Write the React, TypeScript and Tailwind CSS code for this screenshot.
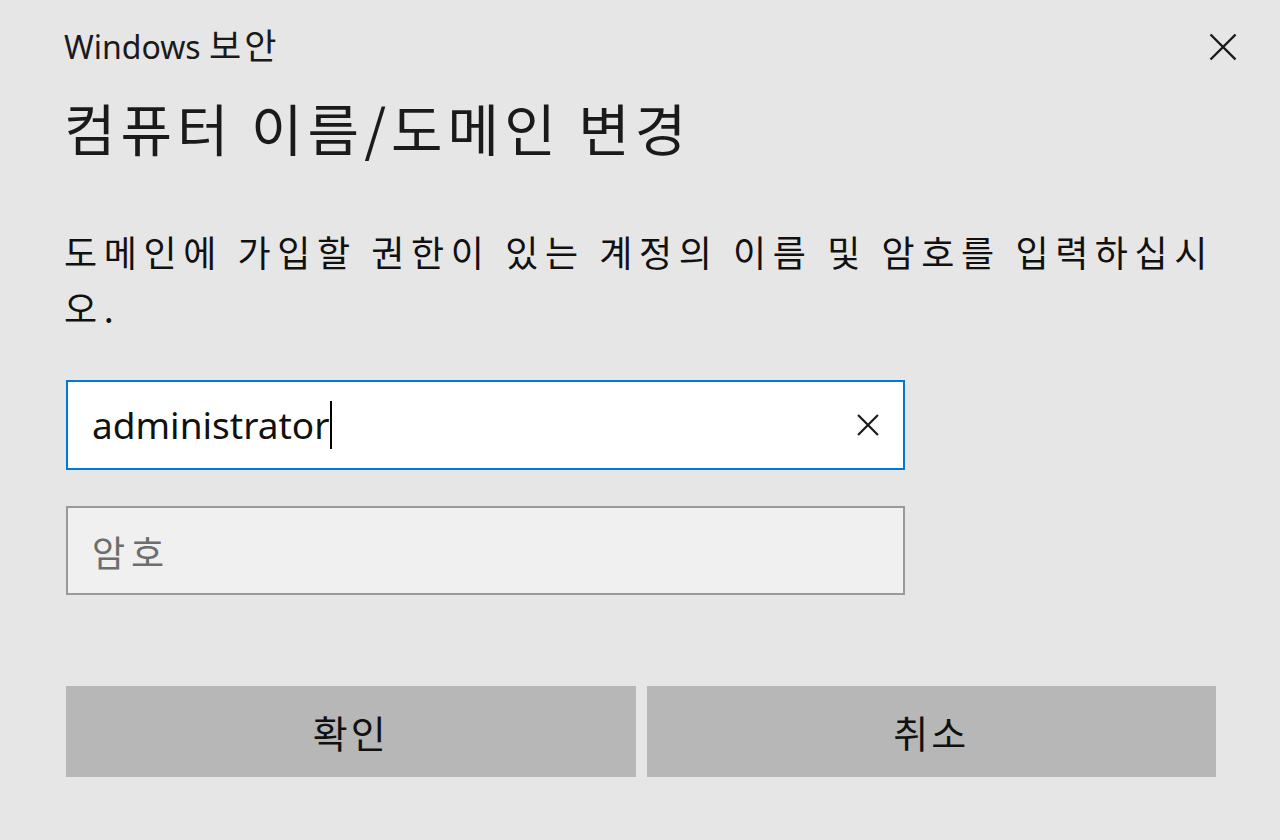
import React from "react";

function XIcon({ size, stroke }: { size: number; stroke: number }) {
  return (
    <svg width={size} height={size} viewBox="0 0 24 24" fill="none">
      <path d="M2 2 L22 22 M22 2 L2 22" stroke="#1a1a1a" strokeWidth={stroke} strokeLinecap="square" />
    </svg>
  );
}

export default function App() {
  return (
    <div className="w-[1280px] h-[840px] bg-[#e6e6e6] text-[#111] flex flex-col pl-[64px] pr-[64px] overflow-hidden font-['Noto_Sans_CJK_KR','Noto_Sans',sans-serif]">
      <div className="flex items-start justify-between pt-[24px] h-[86px]">
        <div className="text-[32px] leading-[40px] text-[#1a1a1a] font-['Noto_Sans','Noto_Sans_CJK_KR',sans-serif]">
          Windows <span className="text-[35px] tracking-[3px] font-['Noto_Sans_CJK_KR','Noto_Sans',sans-serif]">보안</span>
        </div>
        <button className="mt-[8px] mr-[-22px] w-[30px] h-[30px] flex items-center justify-center">
          <XIcon size={28} stroke={2} />
        </button>
      </div>
      <div className="text-[56px] leading-[70px] tracking-[5px] text-[#1a1a1a] h-[118px] mt-[6px]">
        컴퓨터 이름/도메인 변경
      </div>
      <div className="text-[36px] leading-[56px] tracking-[6.6px] text-[#111] w-[1152px] h-[154px] mt-[13px]">
        도메인에 가입할 권한이 있는 계정의 이름 및 암호를 입력하십시오.
      </div>
      <div className="w-[839px] ml-[2px] h-[90px] mt-[3px] border-2 border-[#0078d7] bg-white flex items-center pl-[24px] pr-[24px]">
        <div className="flex-1 flex items-center text-[37px] text-[#111] font-['Noto_Sans','Noto_Sans_CJK_KR',sans-serif]">
          <span>administrator</span>
          <span className="w-[2px] h-[48px] bg-black ml-[1px]" />
        </div>
        <XIcon size={22} stroke={2.4} />
      </div>
      <div className="w-[839px] ml-[2px] mt-[36px] h-[89px] border-2 border-[#999999] bg-[#f0f0f0] flex items-center pl-[24px]">
        <span className="text-[36px] tracking-[6px] text-[#6d6d6d]">암호</span>
      </div>
      <div className="flex gap-[11px] ml-[2px] mt-[91px]">
        <button className="w-[570px] h-[91px] bg-[#b7b7b7] text-[38px] tracking-[3px] text-[#111] flex items-center justify-center">
          확인
        </button>
        <button className="w-[570px] h-[91px] bg-[#b7b7b7] text-[38px] tracking-[3px] text-[#111] flex items-center justify-center">
          취소
        </button>
      </div>
    </div>
  );
}
